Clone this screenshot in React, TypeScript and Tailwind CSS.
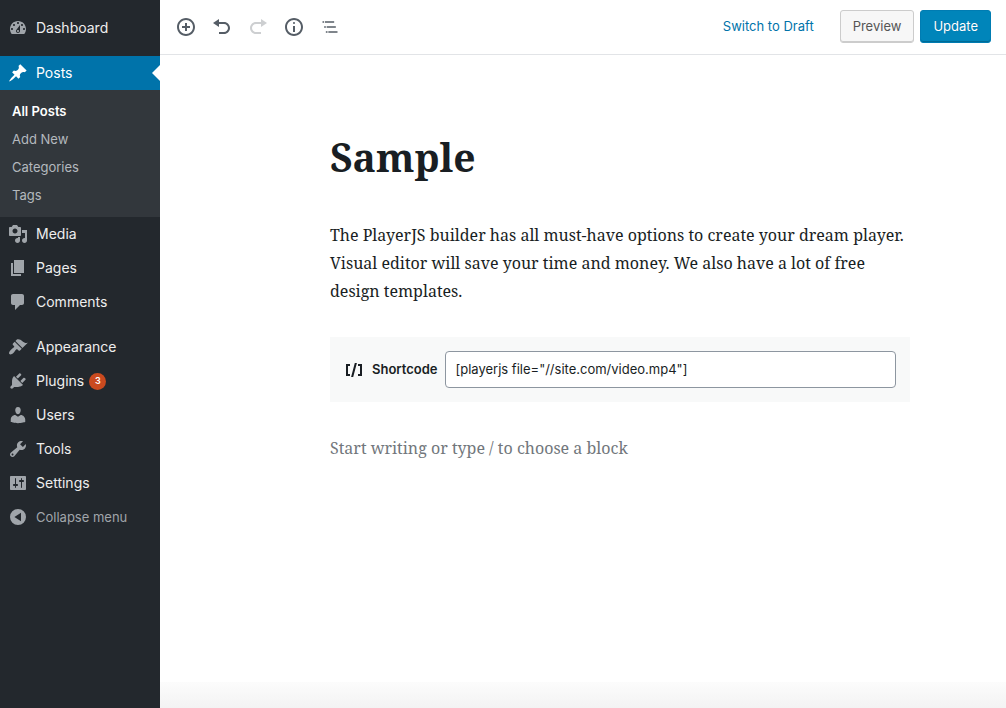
import type { ReactNode } from "react";

const serif = "font-['Noto_Serif','DejaVu_Serif_Condensed','DejaVu_Serif',serif]";

const paths = {
  dashboard:
    "M3.76 16h12.48c1.1-1.37 1.76-3.11 1.76-5 0-4.42-3.58-8-8-8s-8 3.58-8 8c0 1.89.66 3.63 1.76 5zM10 4c.55 0 1 .45 1 1s-.45 1-1 1-1-.45-1-1 .45-1 1-1zM6 6c.55 0 1 .45 1 1s-.45 1-1 1-1-.45-1-1 .45-1 1-1zm8 0c.55 0 1 .45 1 1s-.45 1-1 1-1-.45-1-1 .45-1 1-1zm-5.37 5.55L12 7v6c0 1.1-.9 2-2 2s-2-.9-2-2c0-.57.24-1.08.63-1.45zM4 10c.55 0 1 .45 1 1s-.45 1-1 1-1-.45-1-1 .45-1 1-1zm12 0c.55 0 1 .45 1 1s-.45 1-1 1-1-.45-1-1 .45-1 1-1zm-5 3c0-.55-.45-1-1-1s-1 .45-1 1 .45 1 1 1 1-.45 1-1z",
  post: "M10.44 3.02l1.82-1.82 6.36 6.35-1.83 1.82c-1.05-.68-2.48-.57-3.41.36l-.75.75c-.92.93-1.04 2.35-.35 3.41l-1.83 1.82-2.41-2.41-2.8 2.79c-.42.42-3.38 2.71-3.8 2.29s1.86-3.39 2.28-3.81l2.79-2.79L4.1 9.36l1.83-1.82c1.05.69 2.48.57 3.4-.36l.75-.75c.93-.92 1.05-2.35.36-3.41z",
  media:
    "M13 11V4c0-.55-.45-1-1-1h-1.67L9 1H5L3.67 3H2c-.55 0-1 .45-1 1v7c0 .55.45 1 1 1h10c.55 0 1-.45 1-1zM7 4.5c1.38 0 2.5 1.12 2.5 2.5S8.38 9.5 7 9.5 4.5 8.38 4.5 7 5.62 4.5 7 4.5zM14 6h5v10.5c0 1.38-1.12 2.5-2.5 2.5S14 17.88 14 16.5s1.12-2.5 2.5-2.5c.17 0 .34.02.5.05V9h-3V6zm-4 8.05V13h2v3.5c0 1.38-1.12 2.5-2.5 2.5S7 17.88 7 16.5 8.12 14 9.5 14c.17 0 .34.02.5.05z",
  page: "M6 15V2h10v13H6zm-1 1h8v2H3V5h2v11z",
  comments:
    "M5 2h9c1.1 0 2 .9 2 2v7c0 1.1-.9 2-2 2h-2l-5 5v-5H5c-1.1 0-2-.9-2-2V4c0-1.1.9-2 2-2z",
  appearance:
    "M14.48 11.06L7.41 3.99l1.5-1.5c.5-.56 2.3-.47 3.51.32 1.21.8 1.43 1.28 2.91 2.1 1.18.64 2.45 1.26 4.45.85zm-.71.71L6.7 4.7 4.93 6.47c-.39.39-.39 1.02 0 1.41l1.06 1.06c.39.39.39 1.03 0 1.42-.6.6-1.43 1.11-2.21 1.69-.35.26-.7.53-1.01.84C1.43 14.23.4 16.08 1.4 17.07c.99 1 2.84-.03 4.18-1.36.31-.31.58-.66.85-1.02.57-.78 1.08-1.61 1.69-2.21.39-.39 1.02-.39 1.41 0l1.06 1.06c.39.39 1.02.39 1.41 0z",
  plugins:
    "M13.11 4.36L9.87 7.6 8 5.73l3.24-3.24c.35-.34 1.05-.2 1.56.32.52.51.66 1.21.31 1.55zm-8 1.77l.91-1.12 9.01 9.01-1.19.84c-.71.71-2.63 1.16-3.82 1.16H6.14L4.9 17.26c-.59.59-1.54.59-2.12 0-.59-.58-.59-1.53 0-2.12l1.24-1.24v-3.88c0-1.13.4-3.19 1.09-3.89zm7.26 3.97l3.24-3.24c.34-.35 1.04-.21 1.55.31.52.51.66 1.21.31 1.55l-3.24 3.25z",
  users:
    "M10 9.25c-2.27 0-2.73-3.44-2.73-3.44C7 4.02 7.82 2 9.97 2c2.16 0 2.98 2.02 2.71 3.81 0 0-.41 3.44-2.68 3.44zm0 2.57L12.72 10c2.39 0 4.52 2.33 4.52 4.53v2.49s-3.65 1.13-7.24 1.13c-3.65 0-7.24-1.13-7.24-1.13v-2.49c0-2.25 1.94-4.48 4.47-4.48z",
  tools:
    "M16.68 9.77c-1.34 1.34-3.3 1.67-4.95.99l-5.41 6.52c-.99.99-2.59.99-3.58 0s-.99-2.59 0-3.57l6.52-5.42c-.68-1.65-.35-3.61.99-4.95 1.28-1.28 3.12-1.62 4.72-1.06l-2.89 2.89 2.82 2.82 2.86-2.87c.53 1.58.18 3.39-1.08 4.65zM3.81 16.21c.4.39 1.04.39 1.43 0 .4-.4.4-1.04 0-1.43-.39-.4-1.03-.4-1.43 0-.39.39-.39 1.03 0 1.43z",
  settings:
    "M18 16V4c0-.55-.45-1-1-1H3c-.55 0-1 .45-1 1v12c0 .55.45 1 1 1h14c.55 0 1-.45 1-1zM8 11h1c.55 0 1 .45 1 1s-.45 1-1 1H8v1.5c0 .28-.22.5-.5.5s-.5-.22-.5-.5V13H6c-.55 0-1-.45-1-1s.45-1 1-1h1V5.5c0-.28.22-.5.5-.5s.5.22.5.5V11zm5-2h-1c-.55 0-1-.45-1-1s.45-1 1-1h1V5.5c0-.28.22-.5.5-.5s.5.22.5.5V7h1c.55 0 1 .45 1 1s-.45 1-1 1h-1v5.5c0 .28-.22.5-.5.5s-.5-.22-.5-.5V9z",
  collapse:
    "M10 2a8 8 0 1 0 0 16 8 8 0 0 0 0-16zM13 14.2 6.4 10 13 5.8z",
  insert:
    "M10 1c-5 0-9 4-9 9s4 9 9 9 9-4 9-9-4-9-9-9zm0 16c-3.9 0-7-3.1-7-7s3.1-7 7-7 7 3.1 7 7-3.1 7-7 7zm1-11H9v3H6v2h3v3h2v-3h3V9h-3V6z",
  undo: "M12 5H7V2L1 6l6 4V7h5c2.2 0 4 1.8 4 4s-1.8 4-4 4H7v2h5c3.3 0 6-2.7 6-6s-2.7-6-6-6z",
  redo: "M8 5h5V2l6 4-6 4V7H8c-2.2 0-4 1.8-4 4s1.8 4 4 4h5v2H8c-3.3 0-6-2.7-6-6s2.7-6 6-6z",
  info: "M9 15h2V9H9v6zm1-10c-.5 0-1 .5-1 1s.5 1 1 1 1-.5 1-1-.5-1-1-1zm0-4c-5 0-9 4-9 9s4 9 9 9 9-4 9-9-4-9-9-9zm0 16c-3.9 0-7-3.1-7-7s3.1-7 7-7 7 3.1 7 7-3.1 7-7 7z",
  outline:
    "M5 5H3v2h2V5zm3 8h11v-2H8v2zm9-8H6v2h11V5zM7 11H5v2h2v-2zm0 8h2v-2H7v2zm3-2v2h11v-2H10z",
  shortcode: "M6 14H4V6h2V4H2v12h4v-2zM7.1 17h2.1l3.7-14h-2.1L7.1 17zM14 4v2h2v8h-2v2h4V4h-4z",
};

type IconName = keyof typeof paths;

function Icon({ name, box = 20, className = "" }: { name: IconName; box?: number; className?: string }) {
  return (
    <svg
      viewBox={`0 0 ${box} ${box}`}
      aria-hidden="true"
      fill="currentColor"
      fillRule="evenodd"
      className={`size-5 shrink-0 ${className}`}
    >
      <path d={paths[name]} />
    </svg>
  );
}

function MenuLink({ icon, children }: { icon: IconName; children: ReactNode }) {
  return (
    <li>
      <a href="#" className="flex h-[34px] items-center gap-2 px-2 text-[#eee]">
        <Icon name={icon} className="text-[#a0a5aa]" />
        {children}
      </a>
    </li>
  );
}

function Sidebar() {
  return (
    <nav aria-label="Main menu" className="w-40 shrink-0 bg-[#23282d] pt-[11px] text-sm">
      <ul>
        <MenuLink icon="dashboard">Dashboard</MenuLink>
        <li className="mt-[11px]">
          <a href="#" className="relative flex h-[34px] items-center gap-2 bg-[#0073aa] px-2 text-white">
            <Icon name="post" />
            Posts
            <span className="absolute top-1/2 right-0 -translate-y-1/2 border-y-8 border-r-8 border-y-transparent border-r-white" />
          </a>
          <ul className="bg-[#32373c] px-3 pt-[7px] pb-2 text-[13px] text-[#b4b9be]">
            <li>
              <a href="#" className="flex h-7 items-center font-semibold text-white">All Posts</a>
            </li>
            <li>
              <a href="#" className="flex h-7 items-center">Add New</a>
            </li>
            <li>
              <a href="#" className="flex h-7 items-center">Categories</a>
            </li>
            <li>
              <a href="#" className="flex h-7 items-center">Tags</a>
            </li>
          </ul>
        </li>
        <MenuLink icon="media">Media</MenuLink>
        <MenuLink icon="page">Pages</MenuLink>
        <MenuLink icon="comments">Comments</MenuLink>
      </ul>
      <ul className="mt-[11px]">
        <MenuLink icon="appearance">Appearance</MenuLink>
        <MenuLink icon="plugins">
          <span className="flex items-center gap-[5px]">
            Plugins
            <span className="flex size-[17px] items-center justify-center rounded-full bg-[#ca4a1f] text-[9px] font-semibold text-white">
              3
            </span>
          </span>
        </MenuLink>
        <MenuLink icon="users">Users</MenuLink>
        <MenuLink icon="tools">Tools</MenuLink>
        <MenuLink icon="settings">Settings</MenuLink>
      </ul>
      <button type="button" className="flex h-[34px] w-full items-center gap-2 px-2 text-[13px] text-[#a0a5aa]">
        <Icon name="collapse" />
        Collapse menu
      </button>
    </nav>
  );
}

function ToolButton({ label, disabled, children }: { label: string; disabled?: boolean; children: ReactNode }) {
  return (
    <button
      type="button"
      aria-label={label}
      disabled={disabled}
      className="flex size-9 items-center justify-center text-[#555d66] disabled:text-[#cdcfd1]"
    >
      {children}
    </button>
  );
}

function Toolbar() {
  return (
    <header className="flex items-center justify-between border-b border-[#e2e4e7] py-[9px] pr-[15px] pl-2 text-[13px]">
      <div className="flex">
        <ToolButton label="Add block"><Icon name="insert" /></ToolButton>
        <ToolButton label="Undo"><Icon name="undo" /></ToolButton>
        <ToolButton label="Redo" disabled><Icon name="redo" /></ToolButton>
        <ToolButton label="Content structure"><Icon name="info" /></ToolButton>
        <ToolButton label="Block navigation"><Icon name="outline" box={24} /></ToolButton>
      </div>
      <div className="flex items-center gap-1.5 pb-0.5">
        <button type="button" className="mr-5 h-[33px] pt-0.5 text-[#0073aa]">Switch to Draft</button>
        <button
          type="button"
          className="h-[33px] rounded-[3px] border border-[#ccc] bg-[#f7f7f7] px-3 pt-0.5 text-[#555] shadow-[inset_0_-1px_0_#ccc]"
        >
          Preview
        </button>
        <button
          type="button"
          className="h-[33px] rounded-[3px] border border-[#007cb2] bg-[#0085ba] px-3 pt-0.5 text-white shadow-[inset_0_-1px_0_#006a95] text-shadow-[0_0_1px_#006799]"
        >
          Update
        </button>
      </div>
    </header>
  );
}

export default function App() {
  return (
    <div className="flex min-h-screen bg-white font-['Inter','Liberation_Sans',sans-serif]">
      <Sidebar />
      <div className="flex min-w-0 flex-1 flex-col">
        <Toolbar />
        <main className="flex-1 px-4 pl-[90px]">
          <div className="mx-auto max-w-[580px]">
            <h1 className={`pt-[74px] text-[39px] leading-[56px] font-bold text-[#191e23] ${serif}`}>Sample</h1>
            <p className={`mt-9 text-base leading-7 text-[#191e23] ${serif}`}>
              The PlayerJS builder has all must-have options to create your dream player. Visual editor will save your
              time and money. We also have a lot of free design templates.
            </p>
            <div className="mt-8 flex items-center gap-2 bg-[#f8f9f9] p-3.5 text-[13px] text-[#191e23]">
              <label htmlFor="shortcode" className="flex items-center gap-2 font-semibold">
                <Icon name="shortcode" />
                Shortcode
              </label>
              <input
                id="shortcode"
                type="text"
                defaultValue={'[playerjs file="//site.com/video.mp4"]'}
                className="h-[37px] min-w-0 flex-1 rounded border border-[#8d96a0] bg-white px-[9px] pb-0.5"
              />
            </div>
            <input
              type="text"
              aria-label="Add block"
              placeholder="Start writing or type / to choose a block"
              className={`mt-8 h-7 w-full text-base text-[#191e23] placeholder:text-[#72777c] ${serif}`}
            />
          </div>
        </main>
        <footer className="h-[26px] bg-linear-to-b from-[#fcfcfc] to-[#f3f3f3]" />
      </div>
    </div>
  );
}
